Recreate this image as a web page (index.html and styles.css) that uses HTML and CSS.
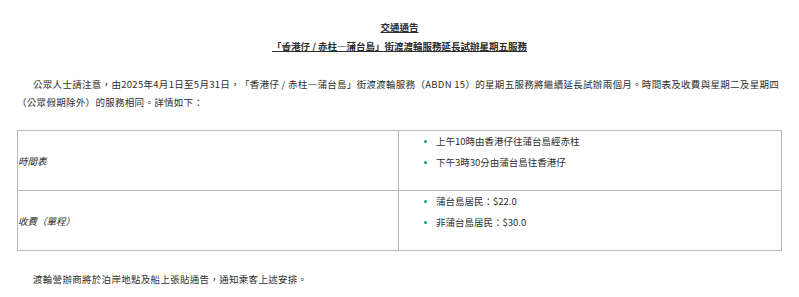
FILE: index.html
```html
<!DOCTYPE html>
<html lang="zh-Hant">
<head>
  <meta charset="UTF-8">
  <meta name="viewport" content="width=device-width, initial-scale=1">
  <title>交通通告</title>
  <link rel="stylesheet" href="styles.css">
</head>

<body>

  <div class="notice">
    <div class="notice-title">
      <p>交通通告</p>
      <p>「香港仔 / 赤柱—蒲台島」街渡渡輪服務延長試辦星期五服務</p>
    </div>

    <p class="notice-text">公眾人士請注意，由2025年4月1日至5月31日，「香港仔 / 赤柱—蒲台島」街渡渡輪服務（ABDN 15）的星期五服務將繼續延長試辦兩個月。時間表及收費與星期二及星期四（公眾假期除外）的服務相同。詳情如下：</p>

    <table class="service-table">
      <tr>
        <td class="label"><em>時間表</em></td>
        <td class="detail">
          <ul>
            <li>上午10時由香港仔往蒲台島經赤柱</li>
            <li>下午3時30分由蒲台島往香港仔</li>
          </ul>
        </td>
      </tr>
      <tr>
        <td class="label"><em>收費（單程）</em></td>
        <td class="detail">
          <ul>
            <li>蒲台島居民：$22.0</li>
            <li>非蒲台島居民：$30.0</li>
          </ul>
        </td>
      </tr>
    </table>

    <p class="notice-text notice-footer">渡輪營辦商將於泊岸地點及船上張貼通告，通知乘客上述安排。</p>
  </div>

</body>
</html>
```

FILE: styles.css
```css
:root {
  --text-color: #2e2e2e;
  --border-color: #b8b8b8;
  --bullet-color: #1f9a7c;
}

* { margin: 0; padding: 0; box-sizing: border-box; }

body {
  font-family: 'Noto Sans CJK TC', 'Noto Sans', sans-serif;
  font-size: 9.5px;
  color: var(--text-color);
  background: #ffffff;
  text-spacing-trim: space-all;
}

.notice {
  padding: 18px 17px;
}

.notice-title {
  text-align: center;
  font-weight: bold;
  line-height: 19px;
}

.notice-title p {
  text-decoration: underline;
}

.notice-text {
  line-height: 18px;
  text-indent: 16px;
  letter-spacing: 0.3px;
  margin-top: 19px;
}

.notice-footer {
  margin-top: 19px;
}

.service-table {
  width: 100%;
  margin-top: 19px;
  border-collapse: collapse;
  border: 1px solid var(--border-color);
}

.service-table td {
  border: 1px solid var(--border-color);
  height: 60px;
}

.label {
  width: 381px;
  vertical-align: middle;
}

.detail {
  vertical-align: top;
  padding: 0 0 0 25px;
}

.detail ul {
  list-style: none;
}

.detail li {
  position: relative;
  padding-left: 12px;
  line-height: 21px;
}

.detail li::before {
  content: "";
  position: absolute;
  left: 0;
  top: 9px;
  width: 3px;
  height: 3px;
  border-radius: 50%;
  background: var(--bullet-color);
}
```
